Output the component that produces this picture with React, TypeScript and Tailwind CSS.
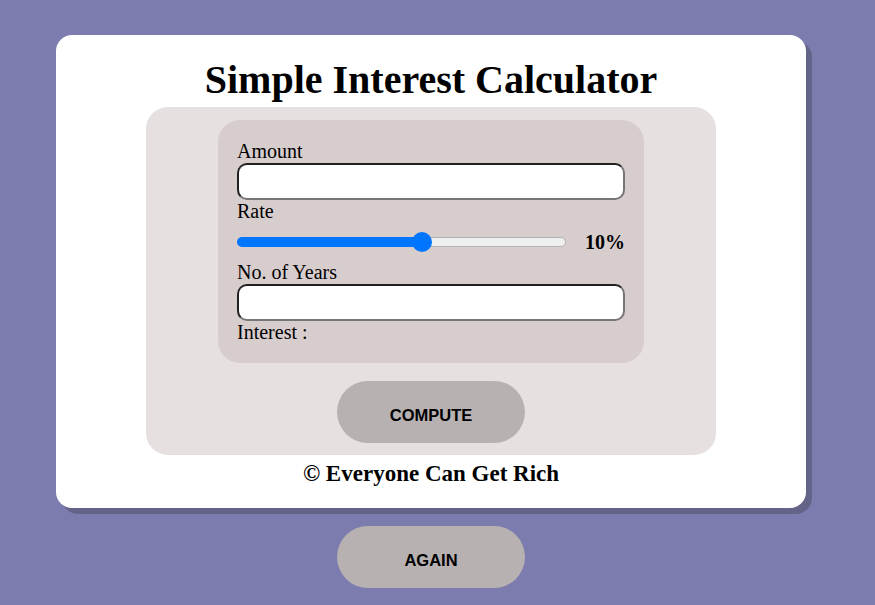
import { useState } from 'react';

const serif = "font-['Liberation_Serif','Times_New_Roman',serif]";

const App = () => {
  const [amount, setAmount] = useState('');
  const [years, setYears] = useState('');
  const [rate] = useState(10);

  // thumb position in percent of track (matches reference)
  const pct = 56.4;

  return (
    <div className={`min-h-[605px] w-full bg-[#7c7caf] pt-[35px] pr-[13px] pb-4 flex flex-col items-center ${serif} text-black`}>
      <div className="w-[750px] bg-white rounded-[16px] shadow-[6px_6px_0_#646489] pt-[22px] pb-[21px] flex flex-col items-center">
        <h1 className="text-[40px] leading-[46px] font-bold">Simple Interest Calculator</h1>

        <div className="mt-[4px] w-[570px] bg-[#e6e0e0] rounded-[22px] pt-[13px] pb-[12px] flex flex-col items-center">
          <div className="w-[426px] bg-[#d7cdcd] rounded-[22px] pt-[20px] pb-[19px] px-[19px] text-[20px] leading-[23px]">
            <label className="block">Amount</label>
            <input
              type="text"
              value={amount}
              onChange={(e) => setAmount(e.target.value)}
              className="block w-[388px] h-[37px] bg-white rounded-[10px] border-2 [border-style:inset] border-[#767676] outline-none px-2"
            />
            <label className="block">Rate</label>
            <div className="h-[38px] flex items-center">
              <div className="relative w-[329px] h-[10px] rounded-full bg-[#efefef] border border-[#b2b2b2]">
                <div
                  className="absolute left-[-1px] top-[-1px] h-[10px] rounded-full bg-[#0075ff]"
                  style={{ width: `${pct}%` }}
                />
                <div
                  className="absolute top-1/2 w-[20px] h-[20px] -translate-x-1/2 -translate-y-1/2 rounded-full bg-[#0075ff]"
                  style={{ left: `${pct}%` }}
                />
              </div>
              <span className="ml-auto font-bold">{rate}%</span>
            </div>
            <label className="block">No. of Years</label>
            <input
              type="text"
              value={years}
              onChange={(e) => setYears(e.target.value)}
              className="block w-[388px] h-[37px] bg-white rounded-[10px] border-2 [border-style:inset] border-[#767676] outline-none px-2"
            />
            <div>Interest : </div>
          </div>

          <button className="mt-[18px] w-[188px] h-[62px] pt-[6px] rounded-full bg-[#b8b1b1] font-['Liberation_Sans',Arial,sans-serif] font-bold text-[16.5px]">
            COMPUTE
          </button>
        </div>

        <p className="mt-[5px] text-[23px] leading-[27px] font-bold">© Everyone Can Get Rich</p>
      </div>

      <button className="mt-[18px] w-[188px] h-[62px] pt-[7px] rounded-full bg-[#b8b1b1] font-['Liberation_Sans',Arial,sans-serif] font-bold text-[16.5px]">
        AGAIN
      </button>
    </div>
  );
};

export default App;
